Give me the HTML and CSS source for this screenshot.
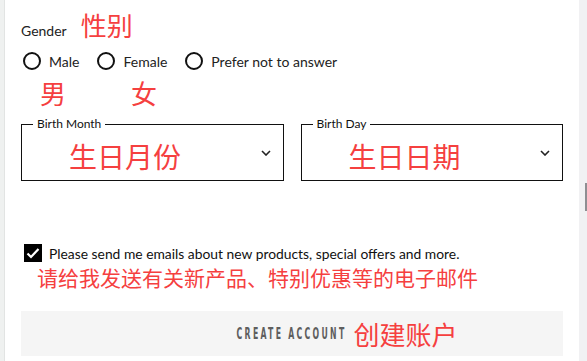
FILE: index.html
```html
<!DOCTYPE html>
<html lang="en">
<head>
<meta charset="utf-8">
<link rel="stylesheet" href="styles.css">
</head>
<body>
<div class="page">
  <div class="gutter"></div>
  <main class="form">
    <div class="gender-row">
      <span class="label">Gender</span>
      <span class="zh zh-title">性别</span>
    </div>
    <div class="radios">
      <label class="radio"><span class="circle"></span>Male</label>
      <label class="radio"><span class="circle"></span>Female</label>
      <label class="radio"><span class="circle"></span>Prefer not to answer</label>
    </div>
    <div class="zh-radios">
      <span class="zh zh-male">男</span>
      <span class="zh zh-female">女</span>
    </div>
    <div class="selects">
      <div class="select">
        <span class="legend">Birth Month</span>
        <span class="zh zh-select">生日月份</span>
        <svg class="chev" width="10" height="6" viewBox="0 0 10 6"><path d="M1 1 L5 5 L9 1" fill="none" stroke="#222" stroke-width="1.6"/></svg>
      </div>
      <div class="select">
        <span class="legend">Birth Day</span>
        <span class="zh zh-select">生日日期</span>
        <svg class="chev" width="10" height="6" viewBox="0 0 10 6"><path d="M1 1 L5 5 L9 1" fill="none" stroke="#222" stroke-width="1.6"/></svg>
      </div>
    </div>
    <div class="consent">
      <span class="check"><svg width="14" height="12" viewBox="0 0 14 12"><path d="M1.5 6.5 L5 10 L12.5 2" fill="none" stroke="#fff" stroke-width="2.2"/></svg></span>
      <span class="consent-text">Please send me emails about new products, special offers and more.</span>
    </div>
    <div class="zh zh-consent">请给我发送有关新产品、特别优惠等的电子邮件</div>
    <div class="button">
      <span class="btn-box"><span class="btn-text">CREATE ACCOUNT</span></span>
      <span class="zh zh-btn">创建账户</span>
    </div>
  </main>
  <div class="scrollbar"><div class="thumb"></div></div>
</div>
</body>
</html>
```

FILE: styles.css
```css
html, body {
  margin: 0;
  padding: 0;
  background: #fff;
}
body {
  font-family: Lato, "Noto Sans", sans-serif;
  color: #111;
}
.page {
  display: flex;
  width: 587px;
  height: 361px;
  overflow: hidden;
}
.gutter {
  width: 4px;
  background: #eff1f0;
  border-right: 1px solid #e2e4e3;
  flex: none;
}
.form {
  flex: 1;
  padding: 0 16px;
}
.scrollbar {
  width: 8px;
  background: #f1f1f3;
  flex: none;
  display: flex;
  justify-content: flex-end;
}
.thumb {
  width: 2px;
  height: 28px;
  margin-top: 183px;
  background: #8e8e92;
}
.zh {
  font-family: "Noto Sans CJK SC", sans-serif;
  color: #f5403f;
}
.gender-row {
  display: flex;
  align-items: baseline;
  gap: 14px;
  height: 30px;
  margin-top: 10px;
}
.label {
  font-size: 14px;
  color: #222;
}
.zh-title {
  font-size: 26px;
  line-height: 30px;
}
.radios {
  display: flex;
  align-items: center;
  height: 34px;
  margin-top: 4px;
  margin-left: 2px;
}
.radio {
  display: flex;
  align-items: center;
  font-size: 14px;
  color: #222;
  margin-right: 18px;
}
.radio .circle {
  width: 14px;
  height: 14px;
  border: 2px solid #111;
  border-radius: 50%;
  margin-right: 8px;
}
.zh-radios {
  display: flex;
  height: 30px;
}
.zh-male {
  font-size: 26px;
  line-height: 30px;
  margin-left: 19px;
}
.zh-female {
  font-size: 26px;
  line-height: 30px;
  margin-left: 65px;
}
.selects {
  display: flex;
  gap: 17px;
  margin-top: 16px;
}
.select {
  position: relative;
  flex: 1;
  height: 55px;
  border: 1px solid #111;
  display: flex;
  align-items: center;
  justify-content: space-between;
  padding: 0 12px 0 47px;
}
.legend {
  position: absolute;
  top: -8px;
  left: 11px;
  background: #fff;
  padding: 0 4px;
  font-size: 12px;
  line-height: 14px;
  color: #111;
}
.zh-select {
  font-size: 28px;
  line-height: 36px;
  margin-top: 6px;
}
.chev {
  margin-top: 1px;
}
.consent {
  display: flex;
  align-items: center;
  margin-top: 62px;
  margin-left: 3px;
  height: 20px;
}
.check {
  width: 18px;
  height: 18px;
  background: #000;
  display: flex;
  align-items: center;
  justify-content: center;
  margin-right: 7px;
}
.consent-text {
  font-size: 13.85px;
  color: #111;
}
.zh-consent {
  font-size: 21px;
  line-height: 28px;
  margin-left: 16px;
}
.button {
  margin-top: 20px;
  height: 45px;
  background: #f5f5f5;
  display: grid;
  grid-template-columns: 1fr auto 1fr;
  align-items: center;
  column-gap: 7px;
}
.btn-box {
  grid-column: 2;
  width: 109px;
  display: flex;
  justify-content: center;
}
.btn-text {
  font-family: "DejaVu Sans Condensed", "DejaVu Sans", sans-serif;
  font-weight: bold;
  font-size: 15px;
  letter-spacing: 4px;
  color: #5e5e5e;
  white-space: nowrap;
  transform: scaleX(0.575);
  flex: none;
}
.zh-btn {
  grid-column: 3;
  justify-self: start;
  font-size: 26px;
  line-height: 34px;
}
```
